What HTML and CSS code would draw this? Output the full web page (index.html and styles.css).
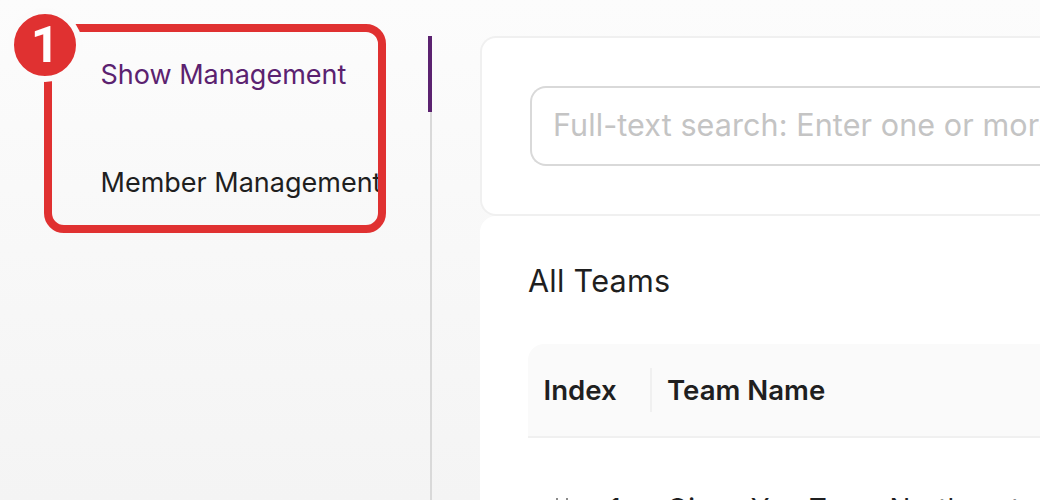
FILE: index.html
```html
<!DOCTYPE html>
<html lang="en">
<head>
<meta charset="utf-8">
<title>All Teams</title>
<link rel="stylesheet" href="styles.css">
</head>
<body>
<div class="page">
  <aside class="sidebar">
    <nav class="menu">
      <a class="menu-item active">Show Management</a>
      <a class="menu-item">Member Management</a>
    </nav>
    <div class="callout"></div>
    <div class="badge">1</div>
  </aside>
  <main class="content">
    <section class="card search-card">
      <div class="search-box">Full-text search: Enter one or more keywords</div>
    </section>
    <section class="card table-card">
      <h2 class="title">All Teams</h2>
      <div class="thead">
        <div class="th th-index">Index</div>
        <div class="th th-name">Team Name</div>
      </div>
      <div class="row">
        <div class="td td-index"><span class="handle"></span>1</div>
        <div class="td td-name">Qinye Yoo Team Northeast</div>
      </div>
    </section>
  </main>
</div>
</body>
</html>
```
FILE: styles.css
```css
* { box-sizing: border-box; }
html, body { margin: 0; height: 100%; }
body {
  width: 1040px;
  height: 500px;
  overflow: hidden;
  font-family: Inter, "Liberation Sans", sans-serif;
  color: #1f1f1f;
  background: linear-gradient(180deg, #fcfcfc 0%, #f4f4f4 100%);
}
.page { display: flex; height: 500px; overflow: hidden; }
.sidebar {
  position: relative;
  width: 432px;
  flex: none;
}
.menu {
  width: 380px;
  height: 464px;
  margin: 36px 0 0 52px;
  border-right: 2px solid #d9d9d9;
  position: relative;
}
.menu-item {
  display: block;
  width: 327px;
  height: 76px;
  padding-left: 48.5px;
  font-size: 27px;
  line-height: 78px;
  white-space: nowrap;
  overflow: hidden;
  color: #1f1f1f;
}
.menu-item.active { color: #5b2270; }
.menu-item.active::after {
  content: "";
  position: absolute;
  right: -2px;
  top: 0;
  width: 4px;
  height: 76px;
  background: #5b2270;
}
.menu-item + .menu-item { margin-top: 32px; }
.callout {
  position: absolute;
  left: 44px;
  top: 24px;
  width: 342px;
  height: 209px;
  border: 8px solid #e03131;
  border-radius: 20px;
}
.badge {
  position: absolute;
  left: 8px;
  top: 8px;
  width: 74px;
  height: 74px;
  border: 6px solid #fbfbfb;
  border-radius: 50%;
  background: #e03131;
  color: #fff;
  font: 700 50px/62px Roboto, sans-serif;
  text-align: center;
}
.content {
  flex: 1;
  min-width: 0;
  padding: 36px 0 0 48px;
  overflow: hidden;
}
.card {
  width: 560px;
  background: #fff;
  border: 2px solid #f0f0f0;
  border-right: 0;
  border-radius: 16px 0 0 16px;
}
.search-card {
  height: 180px;
  padding: 48px 0 0 48px;
}
.search-box {
  height: 80px;
  border: 2px solid #d9d9d9;
  border-right: 0;
  border-radius: 16px 0 0 16px;
  padding-left: 21px;
  font-size: 30.5px;
  letter-spacing: 0.1px;
  line-height: 73px;
  color: #c4c4c4;
  white-space: nowrap;
  overflow: hidden;
}
.table-card {
  border: 0;
  height: 284px;
  padding: 0 0 0 48px;
  border-radius: 16px 0 0 0;
  overflow: hidden;
}
.title {
  margin: 0;
  padding-top: 43px;
  height: 128px;
  font-size: 30.6px;
  letter-spacing: 0.25px;
  line-height: 44px;
  font-weight: 400;
}
.thead {
  display: flex;
  align-items: center;
  height: 94px;
  background: #fafafa;
  border-bottom: 2px solid #f0f0f0;
  border-radius: 16px 0 0 0;
}
.th { font-size: 27.6px; font-weight: 600; line-height: 44px; white-space: nowrap; }
.th-index { width: 124px; padding-left: 15.5px; position: relative; }
.th-index::after {
  content: "";
  position: absolute;
  right: 0;
  top: 0;
  width: 2px;
  height: 44px;
  background: #f0f0f0;
}
.th-name { padding-left: 16px; margin-left: -1px; }
.row { display: flex; height: 62px; font-size: 27.6px; letter-spacing: 0.2px; padding-top: 50px; white-space: nowrap; }
.td { line-height: 40px; }
.td-index { width: 124px; text-align: right; padding-right: 31px; position: relative; }
.handle {
  position: absolute;
  left: 28px;
  top: 10px;
  width: 12px;
  height: 4px;
  border-left: 2px solid #8c8c8c;
  border-right: 2px solid #8c8c8c;
}
.td-name { padding-left: 15px; }
```
